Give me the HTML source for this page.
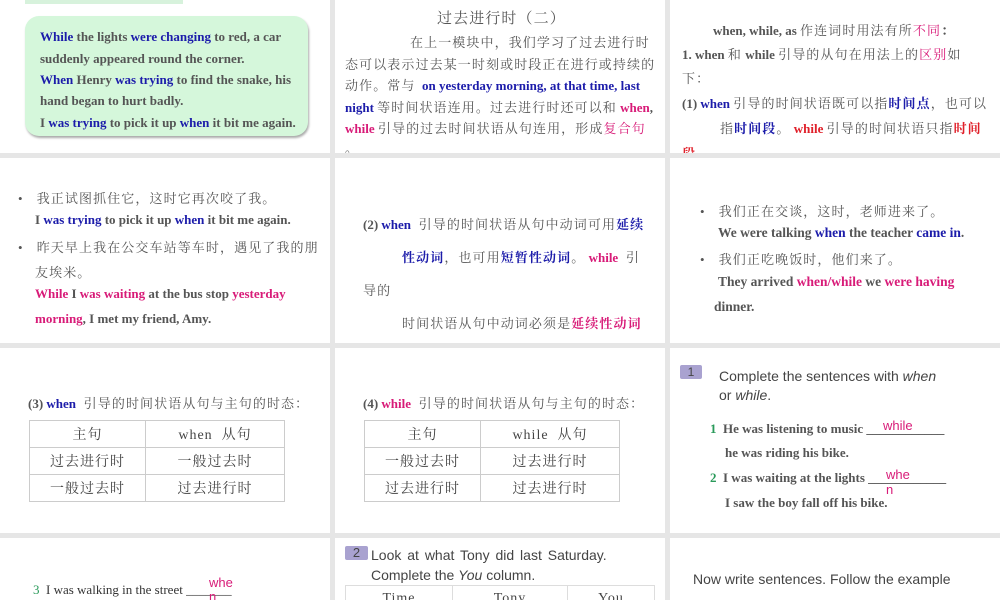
<!DOCTYPE html>
<html><head><meta charset="utf-8"><style>
*{margin:0;padding:0;box-sizing:border-box}
body{width:1000px;height:600px;background:#e6e6e6;position:relative;overflow:hidden;font-family:"Liberation Serif","Noto Serif CJK SC",serif;font-weight:bold;color:#555;font-size:13px}
.p{position:absolute;background:#fff;overflow:hidden}
.t{position:absolute;white-space:nowrap}
.b{color:#1c1caa}.k{color:#d81b78}.r{color:#e0202a}
.c{letter-spacing:1.1px;font-weight:normal}
.sans{font-family:"Liberation Sans",sans-serif;font-weight:normal}
table{position:absolute;border-collapse:collapse;font-weight:normal}
td{border:1px solid #ccc;text-align:center;height:27px;font-size:14px;color:#444;letter-spacing:1px}
.badge{position:absolute;background:#a9a2d0;color:#444;font-family:"Liberation Sans",sans-serif;font-weight:normal;text-align:center;border-radius:2px}
</style></head><body>

<div class="p" style="left:0;top:0;width:330px;height:153px">
 <div style="position:absolute;left:25px;top:0;width:158px;height:4px;background:#d7f2dc"></div>
 <div style="position:absolute;left:25px;top:16px;width:283px;height:120px;background:#d5f7db;border-radius:14px;box-shadow:1px 2px 2px #aaa"></div>
 <div class="t" style="left:40px;top:29px"><span class="b">While</span> the lights <span class="b">were changing</span> to red, a car</div>
 <div class="t" style="left:40px;top:51px">suddenly appeared round the corner.</div>
 <div class="t" style="left:40px;top:72px"><span class="b">When</span> Henry <span class="b">was trying</span> to find the snake, his</div>
 <div class="t" style="left:40px;top:93px">hand began to hurt badly.</div>
 <div class="t" style="left:40px;top:115px">I <span class="b">was trying</span> to pick it up <span class="b">when</span> it bit me again.</div>
</div>

<div class="p" style="left:335px;top:0;width:330px;height:153px">
 <div class="t c" style="left:102px;top:7px;font-size:15px">过去进行时（二）</div>
 <div class="t c" style="left:75px;top:32px">在上一模块中，我们学习了过去进行时</div>
 <div class="t c" style="left:10px;top:54px">态可以表示过去某一时刻或时段正在进行或持续的</div>
 <div class="t" style="left:10px;top:75px"><span class="c">动作。常与</span> <b class="b">&nbsp;on yesterday morning, at that time, last</b></div>
 <div class="t" style="left:10px;top:97px"><b class="b">night</b> <span class="c">等时间状语连用。过去进行时还可以和</span> <b class="k">when</b>,</div>
 <div class="t" style="left:10px;top:118px"><b class="k">while</b> <span class="c">引导的过去时间状语从句连用，形成</span><span class="k c">复合句</span></div>
 <div class="t c" style="left:10px;top:138px">。</div>
</div>

<div class="p" style="left:670px;top:0;width:330px;height:153px">
 <div class="t" style="left:43px;top:20px">when, while, as <span class="c">作连词时用法有所</span><span class="k c">不同</span>：</div>
 <div class="t" style="left:12px;top:44px">1. when <span class="c">和</span> while <span class="c">引导的从句在用法上的</span><span class="k c">区别</span><span class="c">如</span></div>
 <div class="t c" style="left:12px;top:68px">下：</div>
 <div class="t" style="left:12px;top:93px">(1) <span class="b">when</span> <span class="c">引导的时间状语既可以指</span><span class="b c" style="font-weight:bold">时间点</span><span class="c">，也可以</span></div>
 <div class="t" style="left:50px;top:118px"><span class="c">指</span><span class="b c" style="font-weight:bold">时间段</span><span class="c">。</span> <span class="r">while</span> <span class="c">引导的时间状语只指</span><span class="r c" style="font-weight:bold">时间</span></div>
 <div class="t r" style="left:12px;top:143px">段.</div>
</div>

<div class="p" style="left:0;top:158px;width:330px;height:185px">
 <div class="t c" style="left:18px;top:30px">•&nbsp;&nbsp; 我正试图抓住它，这时它再次咬了我。</div>
 <div class="t" style="left:35px;top:54px">I <span class="b">was trying</span> to pick it up <span class="b">when</span> it bit me again.</div>
 <div class="t c" style="left:18px;top:79px">•&nbsp;&nbsp; 昨天早上我在公交车站等车时，遇见了我的朋</div>
 <div class="t c" style="left:35px;top:104px">友埃米。</div>
 <div class="t" style="left:35px;top:128px"><span class="k">While</span> I <span class="k">was waiting</span> at the bus stop <span class="k">yesterday</span></div>
 <div class="t" style="left:35px;top:153px"><span class="k">morning</span>, I met my friend, Amy.</div>
</div>

<div class="p" style="left:335px;top:158px;width:330px;height:185px">
 <div class="t" style="left:28px;top:56px">(2) <span class="b">when</span> <span class="c">&nbsp;引导的时间状语从句中动词可用</span><span class="b c" style="font-weight:bold">延续</span></div>
 <div class="t" style="left:67px;top:89px"><span class="b c" style="font-weight:bold">性动词</span><span class="c">，也可用</span><span class="b c" style="font-weight:bold">短暂性动词</span><span class="c">。</span> <span class="k">while</span> <span class="c">&nbsp;引</span></div>
 <div class="t c" style="left:28px;top:122px">导的</div>
 <div class="t" style="left:67px;top:155px"><span class="c">时间状语从句中动词必须是</span><span class="k c" style="font-weight:bold">延续性动词</span></div>
</div>

<div class="p" style="left:670px;top:158px;width:330px;height:185px">
 <div class="t c" style="left:30px;top:43px">•&nbsp;&nbsp; 我们正在交谈，这时，老师进来了。</div>
 <div class="t" style="left:48px;top:67px;font-size:13.5px">We were talking <span class="b">when</span> the teacher <span class="b">came in</span>.</div>
 <div class="t c" style="left:30px;top:91px">•&nbsp;&nbsp; 我们正吃晚饭时，他们来了。</div>
 <div class="t" style="left:48px;top:116px;font-size:13.5px">They arrived <span class="k">when/while</span> we <span class="k">were having</span></div>
 <div class="t" style="left:44px;top:141px;font-size:13.5px">dinner.</div>
</div>

<div class="p" style="left:0;top:348px;width:330px;height:185px">
 <div class="t" style="left:28px;top:45px">(3) <span class="b">when</span> <span class="c">&nbsp;引导的时间状语从句与主句的时态：</span></div>
 <table style="left:29px;top:72px;width:256px">
  <tr><td style="width:116px">主句</td><td>when &nbsp;从句</td></tr>
  <tr><td>过去进行时</td><td>一般过去时</td></tr>
  <tr><td>一般过去时</td><td>过去进行时</td></tr>
 </table>
</div>

<div class="p" style="left:335px;top:348px;width:330px;height:185px">
 <div class="t" style="left:28px;top:45px">(4) <span class="k">while</span> <span class="c">&nbsp;引导的时间状语从句与主句的时态：</span></div>
 <table style="left:29px;top:72px;width:256px">
  <tr><td style="width:116px">主句</td><td>while &nbsp;从句</td></tr>
  <tr><td>一般过去时</td><td>过去进行时</td></tr>
  <tr><td>过去进行时</td><td>过去进行时</td></tr>
 </table>
</div>

<div class="p" style="left:670px;top:348px;width:330px;height:185px">
 <div class="badge" style="left:10px;top:17px;width:22px;height:14px;font-size:12px;line-height:14px">1</div>
 <div class="t sans" style="left:49px;top:20px;font-size:14px;color:#444">Complete the sentences with <i>when</i></div>
 <div class="t sans" style="left:49px;top:39px;font-size:14px;color:#444">or <i>while</i>.</div>
 <div class="t" style="left:40px;top:73px"><span style="color:#2a9a5a">1</span>&nbsp; He was listening to music ____________</div>
 <div class="t sans k" style="left:213px;top:70px;font-size:13px">while</div>
 <div class="t" style="left:55px;top:97px">he was riding his bike.</div>
 <div class="t" style="left:40px;top:122px"><span style="color:#2a9a5a">2</span>&nbsp; I was waiting at the lights ____________</div>
 <div class="t sans k" style="left:216px;top:119px;font-size:13px;line-height:15px">whe<br>n</div>
 <div class="t" style="left:55px;top:147px">I saw the boy fall off his bike.</div>
</div>

<div class="p" style="left:0;top:538px;width:330px;height:62px">
 <div class="t" style="left:33px;top:44px;font-weight:normal;color:#333"><span style="color:#2a9a5a">3</span>&nbsp; I was walking in the street _______</div>
 <div class="t sans k" style="left:209px;top:38px;font-size:13px;line-height:14px">whe<br>n</div>
</div>

<div class="p" style="left:335px;top:538px;width:330px;height:62px">
 <div class="badge" style="left:10px;top:8px;width:23px;height:14px;font-size:13px;line-height:14px">2</div>
 <div class="t sans" style="left:36px;top:9px;font-size:14px;color:#444;word-spacing:2px">Look at what Tony did last Saturday.</div>
 <div class="t sans" style="left:36px;top:29px;font-size:14px;color:#444">Complete the <i>You</i> column.</div>
 <table style="left:10px;top:47px;width:310px">
  <tr><td style="width:107px;border-color:#ddd">Time</td><td style="width:115px;border-color:#ddd">Tony</td><td style="border-color:#ddd">You</td></tr>
 </table>
</div>

<div class="p" style="left:670px;top:538px;width:330px;height:62px">
 <div class="t sans" style="left:23px;top:33px;font-size:14px;color:#444">Now write sentences. Follow the example</div>
</div>
</body></html>
